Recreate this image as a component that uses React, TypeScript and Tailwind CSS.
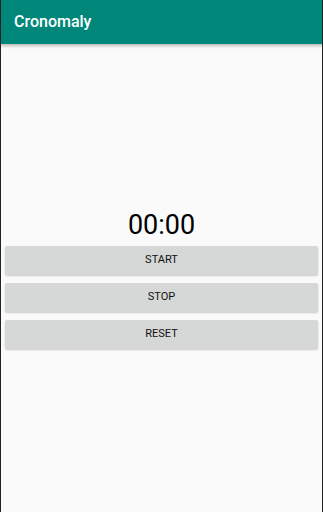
export default function App() {
  const buttons = ["START", "STOP", "RESET"];
  return (
    <div
      className="h-[512px] w-[323px] flex flex-col bg-[#fafafa] border-x border-x-[#222] overflow-hidden"
      style={{ fontFamily: "Roboto, 'Liberation Sans', sans-serif" }}
    >
      <header className="h-[44px] shrink-0 bg-[#00877a] flex items-center px-[14px] shadow-[0_2px_3px_rgba(0,0,0,0.25)] z-10 -mx-px">
        <h1 className="text-white text-[16px] font-medium">Cronomaly</h1>
      </header>
      <main className="flex-1 flex flex-col justify-center">
        <div className="text-center text-[27px] leading-[34px] text-black">00:00</div>
        <div className="flex flex-col gap-[8px] px-[4px] mt-[4px]">
          {buttons.map((b) => (
            <button
              key={b}
              className="h-[29px] rounded-[2px] bg-[#d6d7d7] text-[11px] text-[#111] shadow-[0_1px_2px_rgba(0,0,0,0.2)]"
            >
              {b}
            </button>
          ))}
        </div>
      </main>
    </div>
  );
}
